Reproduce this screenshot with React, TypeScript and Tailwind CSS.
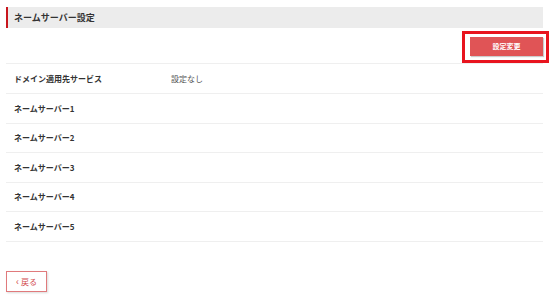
const rows = [
  { label: 'ドメイン適用先サービス', value: '設定なし', h: 'h-[30px]' },
  { label: 'ネームサーバー1', value: '', h: 'h-[30px]' },
  { label: 'ネームサーバー2', value: '', h: 'h-[29px]' },
  { label: 'ネームサーバー3', value: '', h: 'h-[30px]' },
  { label: 'ネームサーバー4', value: '', h: 'h-[29px]' },
  { label: 'ネームサーバー5', value: '', h: 'h-[30px]' },
];

export default function App() {
  return (
    <div
      className="w-[550px] h-[302px] bg-white px-[6px] pt-[7px] text-[#333]"
      style={{ fontFamily: '"Noto Sans CJK JP", "Noto Sans", sans-serif' }}
    >
      <div className="w-[537px]">
        {/* header */}
        <div className="h-[21px] bg-[#ececec] border-l-2 border-[#c8161d] flex items-center pl-[6px]">
          <h2 className="text-[9px] font-bold leading-none">ネームサーバー設定</h2>
        </div>

        {/* action row */}
        <div className="h-[36px] flex justify-end items-start pt-[9px] border-b border-[#efefef]">
          <div className="relative flex">
            <button className="block w-[73px] h-[19px] bg-[#e05456] text-white text-[7px] font-bold leading-none shadow-[1px_1px_1px_rgba(0,0,0,0.2)]">
              設定変更
            </button>
            <div className="absolute -left-[8px] -right-[6px] -top-[6px] -bottom-[7px] border-[3px] border-[#e8141e]" />
          </div>
        </div>

        {/* rows */}
        {rows.map((r) => (
          <div key={r.label} className={`${r.h} flex items-center border-b border-[#efefef] text-[8px] leading-none`}>
            <div className="w-[165px] pl-[8px] font-bold">{r.label}</div>
            <div className="text-[#555]">{r.value}</div>
          </div>
        ))}

        {/* back */}
        <div className="pt-[29px]">
          <button className="w-[41px] h-[21px] border border-[#e07a7c] text-[#d24b4e] text-[8px] leading-none flex items-center justify-center gap-[2px] shadow-[1px_1px_2px_rgba(0,0,0,0.15)]">
            <span className="text-[10px] leading-none -mt-[1px]">‹</span>
            <span>戻る</span>
          </button>
        </div>
      </div>
    </div>
  );
}
